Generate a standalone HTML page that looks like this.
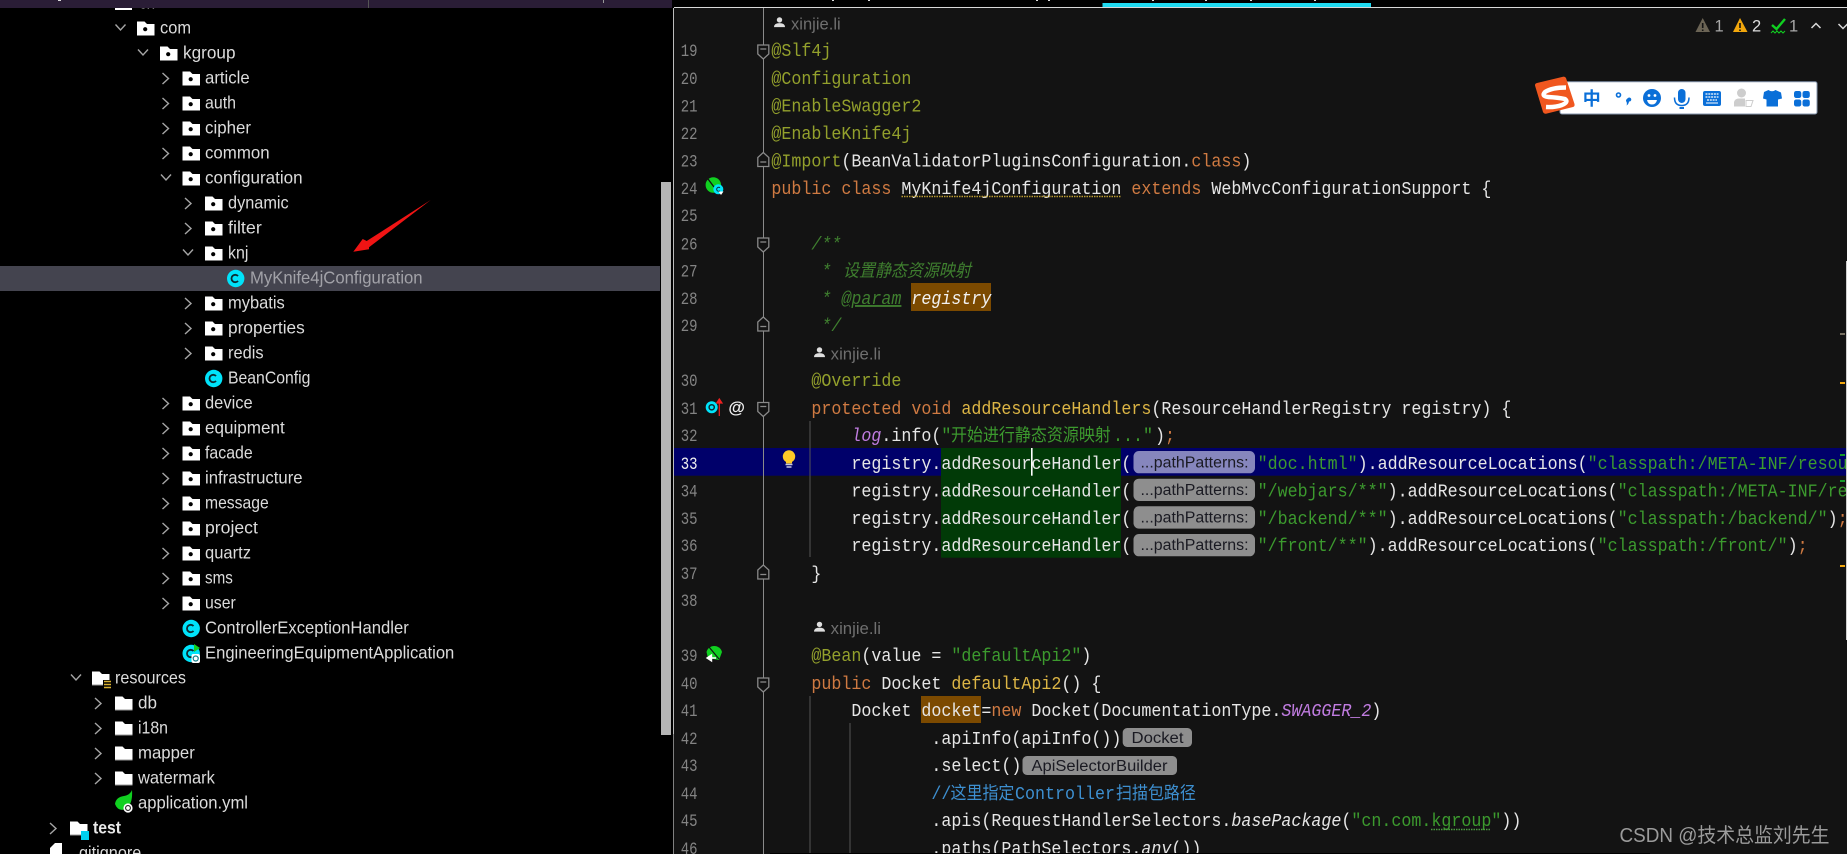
<!DOCTYPE html>
<html lang="zh"><head><meta charset="utf-8"><title>MyKnife4jConfiguration</title>
<style>
html,body{margin:0;padding:0;background:#000;width:1847px;height:854px;overflow:hidden}
svg{display:block;white-space:pre}
.t text{font:17.5px "Liberation Sans",sans-serif;fill:#dcdcdc}
.c{font:16.67px "Liberation Mono","Noto Sans CJK SC",monospace;fill:#e6e6e6}
.n{font:17.5px "Liberation Mono",monospace;fill:#848484}
.z{font-size:16px}
.k{fill:#cf7a42}.a{fill:#93a02c}.m{fill:#dcb545}.s{fill:#3c9a2e}.g{fill:#3f7f2f}.p{fill:#c07ce0}.b{fill:#3d8fd0}
.i{font-style:italic}
.h{font:15.5px "Liberation Sans",sans-serif;fill:#1a1a22}
.x{font:16.5px "Liberation Sans",sans-serif;fill:#6f6f6f}
.q{font:16.5px "Liberation Sans",sans-serif;fill:#a8a8a8}
</style></head><body>
<svg width="1847" height="854" viewBox="0 0 1847 854" xmlns="http://www.w3.org/2000/svg">
<defs>
<g id="fp"><path d="M0-7H7.5L10-4.5H17.5V7H0z" fill="#fff"/><circle cx="8.2" cy=".7" r="2.1" fill="#000"/></g>
<g id="fr"><path d="M0-7H7.5L10-4.5H17.5V7H0z" fill="#fff"/><path d="M0 6.5H17.5" stroke="#999"/></g>
<path id="cr" d="M-3-5.5L3 0L-3 5.5" fill="none" stroke="#a5a5a5" stroke-width="1.4"/>
<path id="cd" d="M-5-3L0 2.5L5-3" fill="none" stroke="#a5a5a5" stroke-width="1.4"/>
<g id="cl"><circle cx="8.7" cy="0" r="8.7" fill="#00e3fa"/><path d="M11-2.4A3.7 3.7 0 1 0 11 2.4" fill="none" stroke="#0b2c33" stroke-width="1.8"/></g>
<g id="fd"><path d="M-5.5-6H5.5V3L0 8L-5.5 3Z" fill="#131313" stroke="#8a8a8a" stroke-width="1.3"/><path d="M-3-2H3" stroke="#8a8a8a" stroke-width="1.3"/></g>
<g id="fu"><path d="M-5.5 6H5.5V-3L0-8L-5.5-3Z" fill="#131313" stroke="#8a8a8a" stroke-width="1.3"/><path d="M-3 1.5H3" stroke="#8a8a8a" stroke-width="1.3"/></g>
<g id="pe" fill="#dedede"><circle cx="5.5" cy="-2.6" r="2.7"/><path d="M0 4.6Q0 .6 5.5 .6Q11 .6 11 4.6Z"/></g>
</defs>

<!-- backgrounds -->
<rect width="672" height="854" fill="#000"/>
<rect x="674" width="1173" height="854" fill="#131313"/>
<rect x="673" y="8" width="1" height="726" fill="#bdbdbd"/>
<rect x="673" y="734" width="1" height="120" fill="#808080"/>

<!-- project tree -->
<rect x="0" y="266" width="660" height="25" fill="#44444f"/>
<rect x="661" y="182" width="10" height="553" fill="#b5b5b5"/>

<g>
<use href="#cd" x="120.5" y="27.5"/><use href="#fp" x="137" y="28.5"/>
<use href="#cd" x="143" y="52.5"/><use href="#fp" x="160" y="53.5"/>
<use href="#cr" x="165.5" y="78.5"/><use href="#fp" x="182.5" y="78.5"/>
<use href="#cr" x="165.5" y="103.5"/><use href="#fp" x="182.5" y="103.5"/>
<use href="#cr" x="165.5" y="128.5"/><use href="#fp" x="182.5" y="128.5"/>
<use href="#cr" x="165.5" y="153.5"/><use href="#fp" x="182.5" y="153.5"/>
<use href="#cd" x="166" y="177.5"/><use href="#fp" x="182.5" y="178.5"/>
<use href="#cr" x="188" y="203.5"/><use href="#fp" x="205" y="203.5"/>
<use href="#cr" x="188" y="228.5"/><use href="#fp" x="205" y="228.5"/>
<use href="#cd" x="188" y="252.5"/><use href="#fp" x="205" y="253.5"/>
<use href="#cl" x="227" y="278.5"/>
<use href="#cr" x="188" y="303.5"/><use href="#fp" x="205" y="303.5"/>
<use href="#cr" x="188" y="328.5"/><use href="#fp" x="205" y="328.5"/>
<use href="#cr" x="188" y="353.5"/><use href="#fp" x="205" y="353.5"/>
<use href="#cl" x="205" y="378.5"/>
<use href="#cr" x="165.5" y="403.5"/><use href="#fp" x="182.5" y="403.5"/>
<use href="#cr" x="165.5" y="428.5"/><use href="#fp" x="182.5" y="428.5"/>
<use href="#cr" x="165.5" y="453.5"/><use href="#fp" x="182.5" y="453.5"/>
<use href="#cr" x="165.5" y="478.5"/><use href="#fp" x="182.5" y="478.5"/>
<use href="#cr" x="165.5" y="503.5"/><use href="#fp" x="182.5" y="503.5"/>
<use href="#cr" x="165.5" y="528.5"/><use href="#fp" x="182.5" y="528.5"/>
<use href="#cr" x="165.5" y="553.5"/><use href="#fp" x="182.5" y="553.5"/>
<use href="#cr" x="165.5" y="578.5"/><use href="#fp" x="182.5" y="578.5"/>
<use href="#cr" x="165.5" y="603.5"/><use href="#fp" x="182.5" y="603.5"/>
<use href="#cl" x="182.5" y="628.5"/>
<use href="#cl" x="182.5" y="653.5"/>
<path d="M194 644l6 4-6 4z" fill="#10d020"/>
<rect x="191.5" y="654" width="8.5" height="9" rx="2" fill="#fff"/><circle cx="195.7" cy="658.5" r="2.5" fill="none" stroke="#15808c" stroke-width="1.2"/>
<use href="#cd" x="76" y="677.5"/><use href="#fr" x="92" y="678.5"/>
<rect x="103" y="680" width="8" height="9" fill="#000"/><path d="M104 681.5h7M104 684.5h7M104 687.5h7" stroke="#d8b030" stroke-width="1.6"/>
<use href="#cr" x="98" y="703.5"/><use href="#fr" x="115" y="703.5"/>
<use href="#cr" x="98" y="728.5"/><use href="#fr" x="115" y="728.5"/>
<use href="#cr" x="98" y="753.5"/><use href="#fr" x="115" y="753.5"/>
<use href="#cr" x="98" y="778.5"/><use href="#fr" x="115" y="778.5"/>
<path d="M115 804Q116 797 124 796Q130 795 132 790Q133 804 126 809Q118 812 115 804Z" fill="#10d020"/>
<circle cx="128" cy="808" r="4.6" fill="#fff"/><circle cx="128" cy="808" r="2.4" fill="none" stroke="#222" stroke-width="1.1"/>
<use href="#cr" x="53" y="828.5"/><use href="#fr" x="70" y="828.5"/>
<rect x="81" y="831" width="8" height="9" fill="#00cfee"/>
<path d="M50 854V848L55 843H62V854Z" fill="#fff"/>
<path d="M115 0H132V10H115Z" fill="#fff"/>
</g>

<g class="t" transform="translate(0,-.5)">
<text x="139" y="9" textLength="16" lengthAdjust="spacingAndGlyphs">cn</text>
<text x="160" y="34" textLength="31" lengthAdjust="spacingAndGlyphs">com</text>
<text x="183" y="59" textLength="52.5" lengthAdjust="spacingAndGlyphs">kgroup</text>
<text x="205" y="84" textLength="44.7" lengthAdjust="spacingAndGlyphs">article</text>
<text x="205" y="109" textLength="31" lengthAdjust="spacingAndGlyphs">auth</text>
<text x="205" y="134" textLength="46" lengthAdjust="spacingAndGlyphs">cipher</text>
<text x="205" y="159" textLength="64.6" lengthAdjust="spacingAndGlyphs">common</text>
<text x="205" y="184" textLength="97.6" lengthAdjust="spacingAndGlyphs">configuration</text>
<text x="228" y="209" textLength="60.7" lengthAdjust="spacingAndGlyphs">dynamic</text>
<text x="228" y="234" textLength="33.8" lengthAdjust="spacingAndGlyphs">filter</text>
<text x="228" y="259" textLength="20.4" lengthAdjust="spacingAndGlyphs">knj</text>
<text x="250" y="284" textLength="172.6" lengthAdjust="spacingAndGlyphs" style="fill:#a2a2a8">MyKnife4jConfiguration</text>
<text x="228" y="309" textLength="56.8" lengthAdjust="spacingAndGlyphs">mybatis</text>
<text x="228" y="334" textLength="76.8" lengthAdjust="spacingAndGlyphs">properties</text>
<text x="228" y="359" textLength="35.6" lengthAdjust="spacingAndGlyphs">redis</text>
<text x="228" y="384" textLength="82.4" lengthAdjust="spacingAndGlyphs">BeanConfig</text>
<text x="205" y="409" textLength="47.7" lengthAdjust="spacingAndGlyphs">device</text>
<text x="205" y="434" textLength="79.8" lengthAdjust="spacingAndGlyphs">equipment</text>
<text x="205" y="459" textLength="47.7" lengthAdjust="spacingAndGlyphs">facade</text>
<text x="205" y="484" textLength="97.6" lengthAdjust="spacingAndGlyphs">infrastructure</text>
<text x="205" y="509" textLength="63.7" lengthAdjust="spacingAndGlyphs">message</text>
<text x="205" y="534" textLength="52.9" lengthAdjust="spacingAndGlyphs">project</text>
<text x="205" y="559" textLength="46" lengthAdjust="spacingAndGlyphs">quartz</text>
<text x="205" y="584" textLength="27.8" lengthAdjust="spacingAndGlyphs">sms</text>
<text x="205" y="609" textLength="30.8" lengthAdjust="spacingAndGlyphs">user</text>
<text x="205" y="634" textLength="203.8" lengthAdjust="spacingAndGlyphs">ControllerExceptionHandler</text>
<text x="205" y="659" textLength="249.3" lengthAdjust="spacingAndGlyphs">EngineeringEquipmentApplication</text>
<text x="115" y="684" textLength="71" lengthAdjust="spacingAndGlyphs">resources</text>
<text x="138" y="709" textLength="19" lengthAdjust="spacingAndGlyphs">db</text>
<text x="138" y="734" textLength="30" lengthAdjust="spacingAndGlyphs">i18n</text>
<text x="138" y="759" textLength="56.8" lengthAdjust="spacingAndGlyphs">mapper</text>
<text x="138" y="784" textLength="76.8" lengthAdjust="spacingAndGlyphs">watermark</text>
<text x="138" y="809" textLength="110" lengthAdjust="spacingAndGlyphs">application.yml</text>
<text x="93" y="834" textLength="28" lengthAdjust="spacingAndGlyphs" style="font-weight:bold;fill:#e8e8e8">test</text>
<text x="74.5" y="859" textLength="66.8" lengthAdjust="spacingAndGlyphs">.gitignore</text>
</g>

<!-- top bar -->
<rect width="672" height="8" fill="#2a1d36"/>
<rect x="368" width="1" height="8" fill="#555"/><rect x="603" width="1" height="3" fill="#999"/>
<rect x="58" width="3" height="1" fill="#ddd"/>
<rect x="673" width="1174" height="7" fill="#000"/>
<rect x="674" y="7" width="1173" height="1" fill="#d8d8d8"/>
<rect x="1102.5" y="3" width="268.5" height="4" fill="#1fdcf3"/>
<path d="M832 0h2v1h-2zM868 0h2v1h-2zM1036 0h2v1h-2zM1048 0h2v1h-2zM1152 0h2v1h-2zM1205 0h2v1h-2zM1250 0h2v1h-2zM1314 0h2v1h-2z" fill="#ddd"/>

<!-- editor highlights -->
<rect x="674" y="448" width="1172" height="27.7" fill="#00006a"/>
<rect x="941" y="448" width="180" height="109.7" fill="#013a07"/>
<rect x="911" y="283" width="80" height="28" fill="#7c4a00"/>
<rect x="921" y="696" width="60" height="27" fill="#7c4a00"/>

<!-- gutter lines -->
<rect x="763" y="8" width="1" height="846" fill="#8a8a8a"/>
<rect x="809.5" y="421" width="1" height="136" fill="#555"/>
<rect x="809.5" y="696" width="1" height="158" fill="#555"/>
<rect x="849.5" y="723" width="1" height="131" fill="#555"/>

<use href="#fd" x="763.3" y="51"/><use href="#fu" x="763.3" y="160.5"/>
<use href="#fd" x="763.3" y="244"/><use href="#fu" x="763.3" y="325"/>
<use href="#fd" x="763.3" y="408.5"/><use href="#fu" x="763.3" y="573"/>
<use href="#fd" x="763.3" y="684"/>

<!-- line numbers -->
<g class="n">
<text x="680.7" y="56" textLength="16.8" lengthAdjust="spacingAndGlyphs">19</text>
<text x="680.7" y="84" textLength="16.8" lengthAdjust="spacingAndGlyphs">20</text>
<text x="680.7" y="111.5" textLength="16.8" lengthAdjust="spacingAndGlyphs">21</text>
<text x="680.7" y="139" textLength="16.8" lengthAdjust="spacingAndGlyphs">22</text>
<text x="680.7" y="166.5" textLength="16.8" lengthAdjust="spacingAndGlyphs">23</text>
<text x="680.7" y="194" textLength="16.8" lengthAdjust="spacingAndGlyphs">24</text>
<text x="680.7" y="221" textLength="16.8" lengthAdjust="spacingAndGlyphs">25</text>
<text x="680.7" y="249.5" textLength="16.8" lengthAdjust="spacingAndGlyphs">26</text>
<text x="680.7" y="276.5" textLength="16.8" lengthAdjust="spacingAndGlyphs">27</text>
<text x="680.7" y="304" textLength="16.8" lengthAdjust="spacingAndGlyphs">28</text>
<text x="680.7" y="331" textLength="16.8" lengthAdjust="spacingAndGlyphs">29</text>
<text x="680.7" y="386" textLength="16.8" lengthAdjust="spacingAndGlyphs">30</text>
<text x="680.7" y="414" textLength="16.8" lengthAdjust="spacingAndGlyphs">31</text>
<text x="680.7" y="441" textLength="16.8" lengthAdjust="spacingAndGlyphs">32</text>
<text x="680.7" y="469" textLength="16.8" lengthAdjust="spacingAndGlyphs" style="fill:#f0f0f0">33</text>
<text x="680.7" y="496.5" textLength="16.8" lengthAdjust="spacingAndGlyphs">34</text>
<text x="680.7" y="524" textLength="16.8" lengthAdjust="spacingAndGlyphs">35</text>
<text x="680.7" y="551" textLength="16.8" lengthAdjust="spacingAndGlyphs">36</text>
<text x="680.7" y="579" textLength="16.8" lengthAdjust="spacingAndGlyphs">37</text>
<text x="680.7" y="606" textLength="16.8" lengthAdjust="spacingAndGlyphs">38</text>
<text x="680.7" y="661" textLength="16.8" lengthAdjust="spacingAndGlyphs">39</text>
<text x="680.7" y="689" textLength="16.8" lengthAdjust="spacingAndGlyphs">40</text>
<text x="680.7" y="716" textLength="16.8" lengthAdjust="spacingAndGlyphs">41</text>
<text x="680.7" y="744" textLength="16.8" lengthAdjust="spacingAndGlyphs">42</text>
<text x="680.7" y="771" textLength="16.8" lengthAdjust="spacingAndGlyphs">43</text>
<text x="680.7" y="799" textLength="16.8" lengthAdjust="spacingAndGlyphs">44</text>
<text x="680.7" y="826" textLength="16.8" lengthAdjust="spacingAndGlyphs">45</text>
<text x="680.7" y="854" textLength="16.8" lengthAdjust="spacingAndGlyphs">46</text>
</g>

<!-- author hints -->
<use href="#pe" x="774" y="22.5"/>
<text class="x" x="791" y="29.5" textLength="49.7" lengthAdjust="spacingAndGlyphs">xinjie.li</text>
<use href="#pe" x="814" y="352.5"/>
<text class="x" x="830.7" y="359.5" textLength="50.3" lengthAdjust="spacingAndGlyphs">xinjie.li</text>
<use href="#pe" x="814" y="627"/>
<text class="x" x="830.7" y="634" textLength="50.3" lengthAdjust="spacingAndGlyphs">xinjie.li</text>

<!-- hint pills -->
<rect x="1133.5" y="451" width="121.5" height="22.3" rx="5.5" fill="#8686bd"/>
<rect x="1133.5" y="478.7" width="121.5" height="22.3" rx="5.5" fill="#8e8e8e"/>
<rect x="1133.5" y="506.3" width="121.5" height="22.3" rx="5.5" fill="#8e8e8e"/>
<rect x="1133.5" y="534" width="121.5" height="22.3" rx="5.5" fill="#8e8e8e"/>
<rect x="1122.7" y="728" width="69.3" height="19" rx="4.5" fill="#8e8e8e"/>
<rect x="1022.5" y="756" width="154.5" height="19" rx="4.5" fill="#8e8e8e"/>
<text class="h" x="1140.5" y="467.3" textLength="108" lengthAdjust="spacingAndGlyphs">...pathPatterns:</text>
<text class="h" x="1140.5" y="495" textLength="108" lengthAdjust="spacingAndGlyphs">...pathPatterns:</text>
<text class="h" x="1140.5" y="522.5" textLength="108" lengthAdjust="spacingAndGlyphs">...pathPatterns:</text>
<text class="h" x="1140.5" y="550" textLength="108" lengthAdjust="spacingAndGlyphs">...pathPatterns:</text>
<text class="h" x="1131.5" y="743" textLength="52" lengthAdjust="spacingAndGlyphs">Docket</text>
<text class="h" x="1031.5" y="771" textLength="136" lengthAdjust="spacingAndGlyphs">ApiSelectorBuilder</text>

<!-- code -->
<g transform="translate(0,-.5)">
<text class="c a" transform="matrix(1 0 0 1.1 0 56.5)" x="771.4">@Slf4j</text>
<text class="c a" transform="matrix(1 0 0 1.1 0 84.5)" x="771.4">@Configuration</text>
<text class="c a" transform="matrix(1 0 0 1.1 0 112)" x="771.4">@EnableSwagger2</text>
<text class="c a" transform="matrix(1 0 0 1.1 0 139.5)" x="771.4">@EnableKnife4j</text>
<text class="c" transform="matrix(1 0 0 1.1 0 167)" x="771.4"><tspan class="a">@Import</tspan>(BeanValidatorPluginsConfiguration.<tspan class="k">class</tspan>)</text>
<text class="c" transform="matrix(1 0 0 1.1 0 194.5)" x="771.4"><tspan class="k">public class </tspan>MyKnife4jConfiguration<tspan class="k"> extends </tspan>WebMvcConfigurationSupport {</text>
<path d="M901.5 197H1121" stroke="#b89a30" stroke-width="1.4" stroke-dasharray="1.5 1" fill="none"/>
<text class="c g i" transform="matrix(1 0 0 1.1 0 250)" x="811.4">/**</text>
<text class="c g i" transform="matrix(1 0 0 1.1 0 277)" x="821.4">*<tspan class="z" x="843">设置静态资源映射</tspan></text>
<text class="c g i" transform="matrix(1 0 0 1.1 0 304.5)" x="821.4">*<tspan x="841.4" text-decoration="underline">@param</tspan><tspan x="911.4" style="fill:#f2f2f2">registry</tspan></text>
<text class="c g i" transform="matrix(1 0 0 1.1 0 331.5)" x="821.4">*/</text>
<text class="c a" transform="matrix(1 0 0 1.1 0 386.5)" x="811.4">@Override</text>
<text class="c" transform="matrix(1 0 0 1.1 0 414.5)" x="811.4"><tspan class="k">protected void </tspan><tspan class="m">addResourceHandlers</tspan>(ResourceHandlerRegistry registry) {</text>
<text class="c" transform="matrix(1 0 0 1.1 0 441.5)" x="851.4"><tspan class="p i">log</tspan>.info(<tspan class="s">"</tspan><tspan class="s z" x="951">开始进行静态资源映射</tspan><tspan class="s" x="1113">..."</tspan><tspan x="1155">)</tspan><tspan class="k" x="1165">;</tspan></text>
<text class="c" transform="matrix(1 0 0 1.1 0 469.5)" x="851.4">registry.addResourceHandler(<tspan class="s" x="1257.6">"doc.html"</tspan>).addResourceLocations(<tspan class="s">"classpath:/META-INF/resources/"</tspan>)</text>
<text class="c" transform="matrix(1 0 0 1.1 0 497)" x="851.4">registry.addResourceHandler(<tspan class="s" x="1257.6">"/webjars/**"</tspan>).addResourceLocations(<tspan class="s">"classpath:/META-INF/resources/webjars/"</tspan>)</text>
<text class="c" transform="matrix(1 0 0 1.1 0 524.5)" x="851.4">registry.addResourceHandler(<tspan class="s" x="1257.6">"/backend/**"</tspan>).addResourceLocations(<tspan class="s">"classpath:/backend/"</tspan>)<tspan class="k">;</tspan></text>
<text class="c" transform="matrix(1 0 0 1.1 0 551.5)" x="851.4">registry.addResourceHandler(<tspan class="s" x="1257.6">"/front/**"</tspan>).addResourceLocations(<tspan class="s">"classpath:/front/"</tspan>)<tspan class="k">;</tspan></text>
<text class="c" transform="matrix(1 0 0 1.1 0 579.5)" x="811.4">}</text>
<text class="c" transform="matrix(1 0 0 1.1 0 661.5)" x="811.4"><tspan class="a">@Bean</tspan>(value = <tspan class="s">"defaultApi2"</tspan>)</text>
<text class="c" transform="matrix(1 0 0 1.1 0 689.5)" x="811.4"><tspan class="k">public </tspan>Docket <tspan class="m">defaultApi2</tspan>() {</text>
<text class="c" transform="matrix(1 0 0 1.1 0 716.5)" x="851.4">Docket docket=<tspan class="k">new </tspan>Docket(DocumentationType.<tspan class="p i">SWAGGER_2</tspan>)</text>
<text class="c" transform="matrix(1 0 0 1.1 0 744.5)" x="931.4">.apiInfo(apiInfo())</text>
<text class="c" transform="matrix(1 0 0 1.1 0 771.5)" x="931.4">.select()</text>
<text class="c b" transform="matrix(1 0 0 1.1 0 799.5)" x="931.4">//<tspan class="z" x="950.5">这里指定</tspan><tspan x="1015">Controller</tspan><tspan class="z" x="1116">扫描包路径</tspan></text>
<text class="c" transform="matrix(1 0 0 1.1 0 826.5)" x="931.4">.apis(RequestHandlerSelectors.<tspan class="i">basePackage</tspan>(<tspan class="s">"cn.com.kgroup"</tspan>))</text>
<text class="c" transform="matrix(1 0 0 1.1 0 854.5)" x="931.4">.paths(PathSelectors.<tspan class="i">any</tspan>())</text>
<path d="M1431 830H1490.7" stroke="#4a9a3f" stroke-width="1.4" stroke-dasharray="1.5 1" fill="none"/>
</g>
<rect x="1031" y="448" width="1.6" height="27.7" fill="#fff"/>
<rect x="770" y="853" width="880" height="1" fill="#000"/>

<!-- gutter icons -->
<circle cx="713.3" cy="185" r="7.7" fill="#10d020"/><path d="M708 179L717 191" stroke="#131313" stroke-width="1.3"/>
<circle cx="718.3" cy="189.3" r="5" fill="#00e3fa"/><path d="M720 187.8A2 2 0 1 0 720 190.8" fill="none" stroke="#0b2c33" stroke-width="1"/>
<path d="M718.5 191.5H723.5L721 195Z" fill="#fff"/>
<circle cx="711.7" cy="407.3" r="6" fill="#00e3fa"/><circle cx="711.7" cy="407.3" r="2.6" fill="none" stroke="#0b2c33" stroke-width="1.5"/>
<path d="M719.3 416V401M716.7 403L719.3 399L722 403Z" stroke="#f02020" stroke-width="1.2" fill="#f02020"/>
<text x="736.7" y="413" text-anchor="middle" style="font:bold 17px 'Liberation Sans',sans-serif;fill:#f0f0f0">@</text>
<circle cx="789" cy="456.5" r="6.2" fill="#ffc927"/><path d="M786 461h6v2.5h-6z" fill="#ffc927"/>
<path d="M785.5 464.5h7M786.5 467h5" stroke="#c8c8e0" stroke-width="1.4"/>
<path d="M706.5 652A8 8 0 0 1 722 652L719 660L708 658Z" fill="#10d020"/><path d="M709 647L719 659" stroke="#131313" stroke-width="1.2"/>
<path d="M716 658H709M711.5 655L707 658L711.5 661Z" stroke="#fff" stroke-width="1.4" fill="#fff"/>

<!-- inspections widget -->
<path d="M1702.7 18L1710 32H1695.5Z" fill="#6b6455"/><path d="M1702.7 23V28M1702.7 29.5V31" stroke="#131313" stroke-width="1.6"/>
<text class="q" x="1714.5" y="31.5">1</text>
<path d="M1740 18L1747.5 32H1733Z" fill="#f2a70c"/><path d="M1740 23V28M1740 29.5V31" stroke="#131313" stroke-width="1.6"/>
<text class="q" x="1752" y="31.5" style="fill:#ddd">2</text>
<path d="M1772 25L1776.5 29L1785 19" fill="none" stroke="#10d020" stroke-width="2.4"/><path d="M1771 33l2-2 2 2 2-2 2 2 2-2 2 2 2-2" fill="none" stroke="#10d020" stroke-width="1"/>
<text class="q" x="1789" y="31.5">1</text>
<path d="M1811.5 28L1816 23.5L1820.5 28" fill="none" stroke="#d8d8d8" stroke-width="1.5"/>
<path d="M1838.5 24L1843 28.5L1847.5 24" fill="none" stroke="#d8d8d8" stroke-width="1.5"/>

<!-- right markers -->
<rect x="1846" y="261" width="1" height="379" fill="#cfcfcf"/>
<rect x="1840" y="333" width="5" height="2" fill="#777062"/>
<rect x="1840" y="382" width="5" height="2" fill="#f2a70c"/>
<rect x="1840" y="565" width="5" height="2" fill="#f2a70c"/>
<rect x="1840" y="454" width="5" height="2" fill="#159a28"/>
<rect x="1840" y="480" width="5" height="2" fill="#159a28"/>

<!-- IME toolbar -->
<rect x="1560" y="81.7" width="257" height="32.3" rx="2" fill="#fff" stroke="#8595ad"/>
<path d="M1537 83L1563 76.7Q1565 76.3 1566 78L1574.5 104Q1575 106.5 1573 107L1546 113.7Q1544 114 1543 112L1535 85.5Q1534.8 83.6 1537 83Z" fill="#f0571f"/>
<path d="M1566 87.5Q1552 87.5 1545 92Q1541 96 1548 97Q1558 97.5 1565 99Q1569 102 1562 105Q1555 107.5 1546 107" fill="none" stroke="#fff" stroke-width="4.4"/>
<g fill="#0a6fd8">
<text x="1591.7" y="105" text-anchor="middle" style="font:bold 18px 'Noto Sans CJK SC',sans-serif;fill:#0a6fd8">中</text>
<circle cx="1618.5" cy="95" r="2" fill="none" stroke="#0a6fd8" stroke-width="1.6"/>
<path d="M1628 98a2 2 0 1 1 1 3.5q-.2 2.5-2.5 4q1-2.5-.5-4.5q-.2-1.500 2-3z"/>
<circle cx="1652" cy="98" r="9"/>
<circle cx="1649" cy="95.5" r="1.4" fill="#fff"/><circle cx="1655" cy="95.5" r="1.4" fill="#fff"/>
<path d="M1647 100H1657Q1656 104.5 1652 104.5Q1648 104.5 1647 100Z" fill="#fff"/>
<rect x="1678" y="89" width="7.5" height="14" rx="3.7"/>
<path d="M1674.5 97.5Q1674.5 105.5 1681.7 105.5Q1689 105.5 1689 97.5" fill="none" stroke="#0a6fd8" stroke-width="1.5"/>
<rect x="1679.5" y="107" width="4.5" height="2"/>
<rect x="1703" y="91" width="18" height="15" rx="2"/>
<path d="M1705.5 94h13M1705.5 97h13M1707 100h10" stroke="#fff" stroke-width="1.3" stroke-dasharray="2 .8"/>
<path d="M1706 103h12" stroke="#fff" stroke-width="1"/>
<path d="M1764 92L1768.5 90Q1772 92.5 1775.5 90L1781 92.5L1782 98.5L1778 99.5V106.5H1766.5V99.5L1763 98.5Z"/>
<rect x="1794" y="91" width="7.3" height="7" rx="2.2"/><rect x="1802.5" y="91" width="7.3" height="7" rx="2.2"/>
<rect x="1794" y="99.5" width="7.3" height="7" rx="2.2"/><rect x="1802.5" y="99.5" width="7.3" height="7" rx="2.2"/>
</g>
<g fill="#cdcdcd"><circle cx="1741.5" cy="93" r="4.5"/><path d="M1734 106.5V102Q1735 98.5 1739 98.5H1745V106.5Z"/>
<path d="M1746 100.5H1753L1751 106.5H1746Z" fill="#fff" stroke="#cdcdcd" stroke-width="1"/></g>

<!-- red annotation arrow -->
<path d="M353.3 251.7L362.7 239L366.7 241L430.7 200L369 247.3L369 249.3Z" fill="#f01414"/>

<!-- watermark -->
<text x="1619.5" y="842" textLength="210" lengthAdjust="spacingAndGlyphs" style="font:20px 'Liberation Sans','Noto Sans CJK SC',sans-serif;fill:#9b9b9b">CSDN @技术总监刘先生</text>
</svg>
</body></html>
